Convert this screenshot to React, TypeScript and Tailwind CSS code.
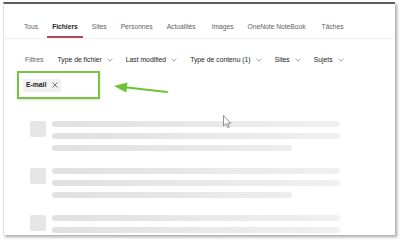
import React from "react";

const tabs = [
  { label: "Tous", extra: "" },
  { label: "Fichiers", active: true, extra: "" },
  { label: "Sites", extra: "" },
  { label: "Personnes", extra: "" },
  { label: "Actualités", extra: "" },
  { label: "Images", extra: "ml-[2px]" },
  { label: "OneNote NoteBook", extra: "" },
  { label: "Tâches", extra: "ml-[2px]" },
];

const filters = ["Type de fichier", "Last modified", "Type de contenu (1)", "Sites", "Sujets"];

function Chevron() {
  return (
    <svg width="6" height="4" viewBox="0 0 6 4" className="ml-[5px]">
      <path d="M0.5 0.8 L3 3.2 L5.5 0.8" fill="none" stroke="#707070" strokeWidth="0.7" />
    </svg>
  );
}

function SkeletonGroup({ first }: { first?: boolean }) {
  return (
    <div className={`flex gap-[6px] ${first ? "" : "mt-[17px]"}`}>
      <div className="w-[16px] h-[16px] rounded-[2px] bg-[#e6e6e6] shrink-0" />
      <div className="flex flex-col gap-[6px]">
        <div className="w-[288px] h-[6px] rounded-[3px] bg-gradient-to-r from-[#e0e0e0] to-[#f0f0f0]" />
        <div className="w-[288px] h-[6px] rounded-[3px] bg-gradient-to-r from-[#e0e0e0] to-[#f0f0f0]" />
        <div className="w-[240px] h-[6px] rounded-[3px] bg-gradient-to-r from-[#e0e0e0] to-[#ededed]" />
      </div>
    </div>
  );
}

export default function App() {
  return (
    <div
      className="relative w-[400px] h-[240px] bg-white overflow-hidden pt-[2px] pl-[3px]"
      style={{ fontFamily: '"Liberation Sans", Arial, sans-serif' }}
    >
      <div className="w-[392px] h-[233px] bg-white border-t-2 border-t-[#5c5c5c] border-l border-l-[#e3e3e3] shadow-[2px_2px_3px_rgba(0,0,0,0.35)] overflow-hidden">
        {/* Tabs */}
        <div className="flex h-[35px] pl-[15px] gap-[4px] border-b border-b-[#f0f0f0]">
          {tabs.map((t) => (
            <div
              key={t.label}
              className={`h-[34px] flex flex-col justify-end px-[5px] pb-[4px] border-b-2 ${t.extra} ${
                t.active ? "border-b-[#b5475f]" : "border-b-transparent"
              }`}
            >
              <span
                className={`text-[6.7px] leading-[10px] whitespace-nowrap ${
                  t.active ? "font-bold text-[#242424]" : "text-[#616161]"
                }`}
              >
                {t.label}
              </span>
            </div>
          ))}
        </div>

        {/* Filters */}
        <div className="flex items-center h-[10px] mt-[16px] pl-[21px] gap-[13px]">
          <span className="text-[6.8px] leading-[10px] text-[#616161] mr-[1px]">Filtres</span>
          {filters.map((f) => (
            <div key={f} className="flex items-center">
              <span className="text-[6.8px] leading-[10px] text-[#242424] whitespace-nowrap">{f}</span>
              <Chevron />
            </div>
          ))}
        </div>

        {/* Selected filter chip in highlight box */}
        <div className="ml-[13px] mt-[6px] w-[83px] h-[28px] border-2 border-[#7cc242] flex items-center pl-[4px] shadow-[0_1px_2px_rgba(0,0,0,0.15)]">
          <div className="h-[13px] px-[3px] bg-[#f0f0f0] rounded-[2px] flex items-center gap-[6px]">
            <span className="text-[6.8px] leading-[10px] font-bold text-[#242424]">E-mail</span>
            <svg width="6" height="6" viewBox="0 0 6 6">
              <path d="M0.5 0.5 L5.5 5.5 M5.5 0.5 L0.5 5.5" stroke="#444" strokeWidth="0.7" />
            </svg>
          </div>
        </div>

        {/* Skeleton */}
        <div className="pl-[26px] mt-[22px] flex flex-col">
          <SkeletonGroup first />
          <SkeletonGroup />
          <SkeletonGroup />
        </div>
      </div>

      {/* Green annotation arrow */}
      <svg className="absolute left-[110px] top-[78px]" width="62" height="20" viewBox="0 0 62 20">
        <line x1="15" y1="9.3" x2="57" y2="14" stroke="#6cc230" strokeWidth="2" strokeLinecap="round" />
        <polygon points="4,8 17.5,4.5 16.3,14.4" fill="#6cc230" />
      </svg>

      {/* Mouse cursor */}
      <svg className="absolute left-[223px] top-[115px]" width="9" height="14" viewBox="0 0 9 14">
        <path d="M0.5 0.5 L0.5 11 L3 8.7 L4.8 12.6 L6.3 11.9 L4.6 8.2 L7.8 8.2 Z" fill="#fff" stroke="#666" strokeWidth="0.7" />
      </svg>
    </div>
  );
}
